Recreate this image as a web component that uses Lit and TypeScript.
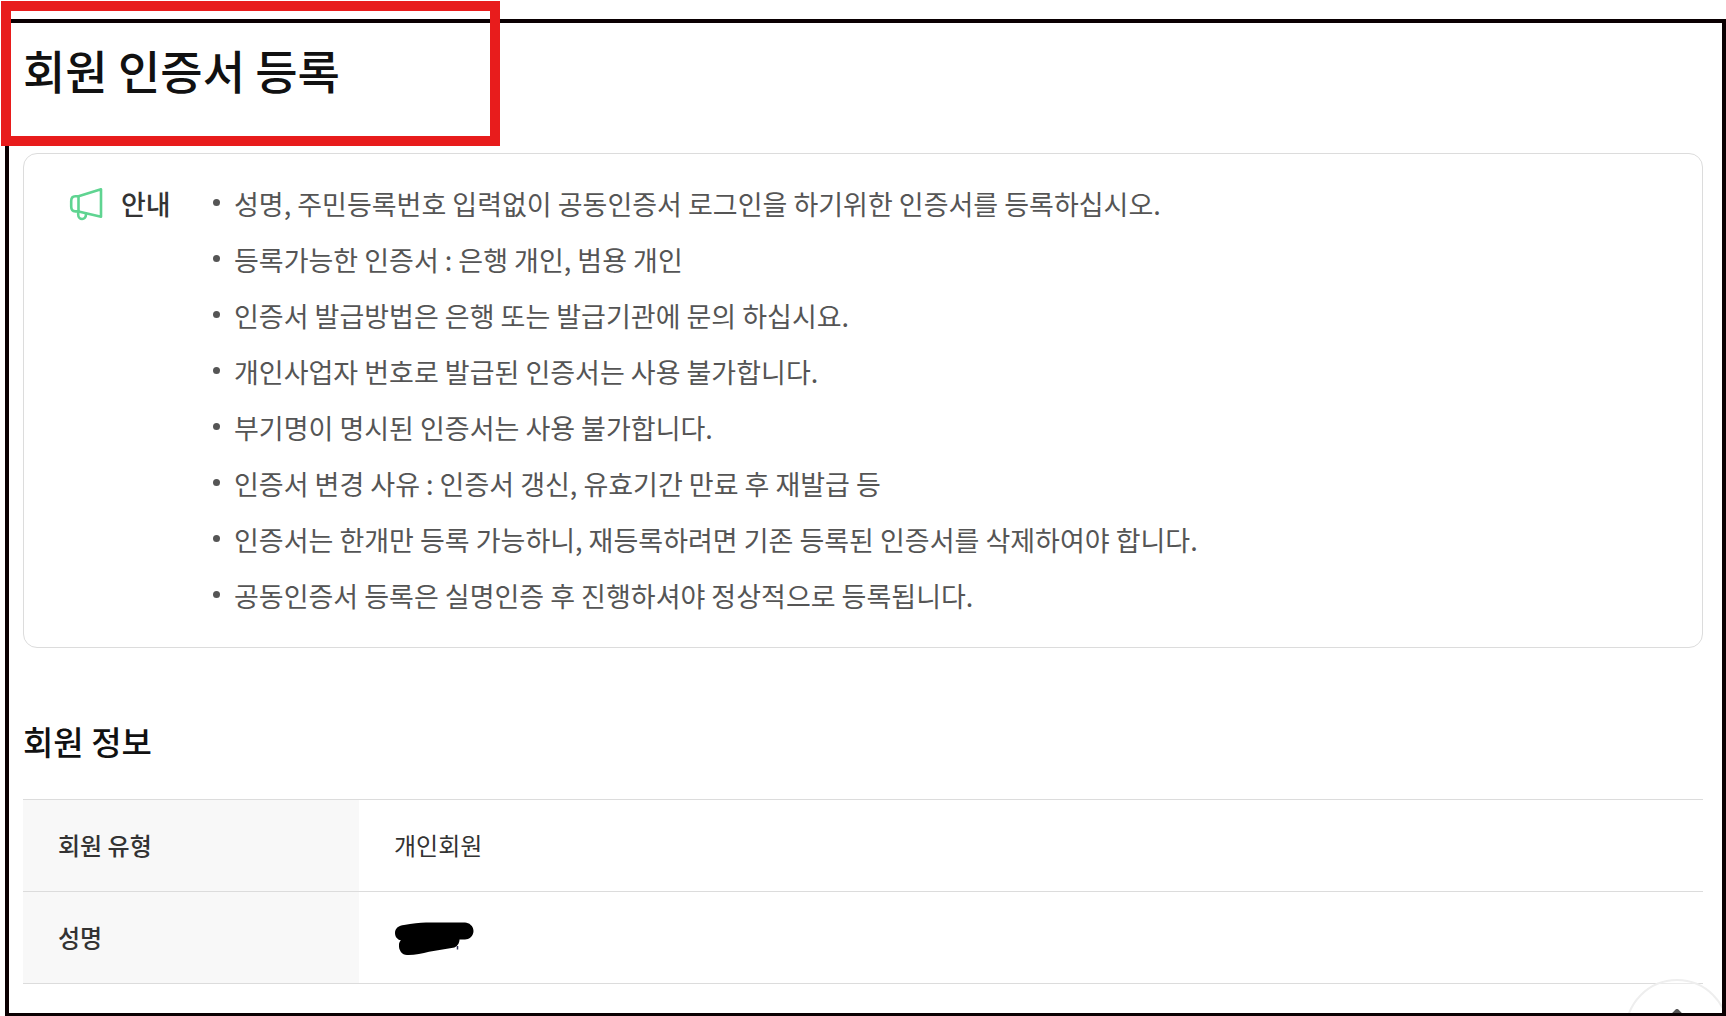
import { LitElement, html, css } from "lit";
import { customElement } from "lit/decorators.js";

const NOTICES = [
  "성명, 주민등록번호 입력없이 공동인증서 로그인을 하기위한 인증서를 등록하십시오.",
  "등록가능한 인증서 : 은행 개인, 범용 개인",
  "인증서 발급방법은 은행 또는 발급기관에 문의 하십시요.",
  "개인사업자 번호로 발급된 인증서는 사용 불가합니다.",
  "부기명이 명시된 인증서는 사용 불가합니다.",
  "인증서 변경 사유 : 인증서 갱신, 유효기간 만료 후 재발급 등",
  "인증서는 한개만 등록 가능하니, 재등록하려면 기존 등록된 인증서를 삭제하여야 합니다.",
  "공동인증서 등록은 실명인증 후 진행하셔야 정상적으로 등록됩니다.",
];

@customElement("notice-box")
export class NoticeBox extends LitElement {
  static styles = css`
    :host {
      display: block;
    }
    .box {
      display: flex;
      align-items: flex-start;
      padding: 30px 44px 31px;
      border: 1px solid #dcdcdc;
      border-radius: 14px;
    }
    .label {
      display: flex;
      align-items: center;
      gap: 17px;
      width: 145px;
      flex: none;
      margin: 0;
      font-size: 27px;
      font-weight: 500;
      line-height: 40px;
      color: #333;
    }
    .icon {
      flex: none;
      width: 36px;
      height: 36px;
    }
    .list {
      display: flex;
      flex-direction: column;
      gap: 16px;
      margin: 0;
      padding: 0;
      list-style: none;
      font-size: 27px;
      line-height: 40px;
      color: #555;
    }
    .item {
      display: flex;
      gap: 14px;
    }
    .item::before {
      content: "";
      flex: none;
      width: 7px;
      height: 7px;
      margin-top: 15px;
      border-radius: 50%;
      background: #555;
    }
  `;

  render() {
    return html`
      <section class="box" aria-labelledby="notice">
        <h2 class="label" id="notice">
          <svg class="icon" viewBox="0 0 36 36" fill="none" stroke="#5fd491" stroke-width="2.6" stroke-linejoin="round" stroke-linecap="round" aria-hidden="true">
            <path d="M10.5 10.2 33 3.3V30.8L10.5 25.4Z" />
            <path d="M10.5 10.2H7.2Q3.2 10.2 3.2 15V20.6Q3.2 25.4 7.2 25.4H10.5" />
            <path d="M10.2 25.6V28.4C10.2 34.4 18 34.4 18 28.6V27.4" />
          </svg>
          안내
        </h2>
        <ul class="list">
          ${NOTICES.map((n) => html`<li class="item">${n}</li>`)}
        </ul>
      </section>
    `;
  }
}

@customElement("app-root")
export class AppRoot extends LitElement {
  static styles = css`
    :host {
      display: block;
      font-family: "Noto Sans CJK KR", "Noto Sans", sans-serif;
      color: #111;
      background: #fff;
    }
    .page {
      position: relative;
      display: flex;
      box-sizing: border-box;
      min-height: 100vh;
      padding: 19px 0 0 5px;
    }
    .frame {
      position: relative;
      flex: 1;
      box-sizing: border-box;
      overflow: hidden;
      padding: 12px 19px 28px 14px;
      border: 4px solid #0a0002;
      border-bottom-width: 3px;
    }
    .title {
      margin: 0 0 50px;
      font-size: 46px;
      font-weight: 500;
      line-height: 68px;
    }
    .subtitle {
      margin: 66px 0 31px;
      font-size: 33px;
      font-weight: 500;
      line-height: 54px;
    }
    .info {
      width: 100%;
      border-collapse: collapse;
      border-top: 1px solid #dcdcdc;
      font-size: 24px;
      line-height: 36px;
      color: #333;
    }
    .head,
    .cell {
      height: 92px;
      box-sizing: border-box;
      padding: 0 35px 2px;
      border-bottom: 1px solid #dcdcdc;
      text-align: left;
      vertical-align: middle;
    }
    .head {
      width: 20%;
      background: #f8f8f8;
      font-weight: 500;
    }
    .cell {
      font-weight: 400;
    }
    .redaction {
      display: block;
      width: 80px;
      height: 34px;
      margin-top: 4px;
    }
    .highlight {
      position: absolute;
      top: 1px;
      left: 1px;
      box-sizing: border-box;
      width: 499px;
      height: 145px;
      border: 10px solid #e81c1c;
      pointer-events: none;
    }
    .top {
      position: absolute;
      right: -7px;
      bottom: -70px;
      display: flex;
      justify-content: center;
      box-sizing: border-box;
      width: 104px;
      height: 104px;
      padding: 28px 0 0;
      border: 2px solid #eee;
      border-radius: 50%;
      background: rgba(255, 255, 255, 0.4);
      cursor: pointer;
    }
    .arrow {
      width: 40px;
      height: 40px;
    }
  `;

  private toTop() {
    window.scrollTo({ top: 0, behavior: "smooth" });
  }

  render() {
    return html`
      <div class="page">
        <main class="frame">
          <h1 class="title">회원 인증서 등록</h1>
          <notice-box></notice-box>
          <h2 class="subtitle" id="info">회원 정보</h2>
          <table class="info" aria-labelledby="info">
            <tbody>
              <tr>
                <th class="head" scope="row">회원 유형</th>
                <td class="cell">개인회원</td>
              </tr>
              <tr>
                <th class="head" scope="row">성명</th>
                <td class="cell">
                  <svg class="redaction" viewBox="0 0 80 34" aria-hidden="true">
                    <path d="M1 11C1 6 5 3.500 10 3C18 1.200 26 .7 32 .5H71C75 .5 79.500 4 79.500 9C79.500 14 75 17.500 71 17.500H65.500C65.500 21.500 63 25 59 25.800L35 29.800C28 31.500 20 33.300 13 33C8 33 4.500 28 5 23C5 21 5.500 19.500 7 18.500C3 17.500 1 14.500 1 11Z" />
                    <path d="M63.500 24V27.500" stroke="#335" stroke-width="1.500" />
                  </svg>
                </td>
              </tr>
            </tbody>
          </table>
          <button class="top" type="button" aria-label="맨 위로" @click=${this.toTop}>
            <svg class="arrow" viewBox="0 0 40 40" fill="none" stroke="#555" stroke-width="4" stroke-linejoin="round" aria-hidden="true">
              <path d="M6 16 20 2 34 16M20 2V38" />
            </svg>
          </button>
        </main>
        <div class="highlight"></div>
      </div>
    `;
  }
}
